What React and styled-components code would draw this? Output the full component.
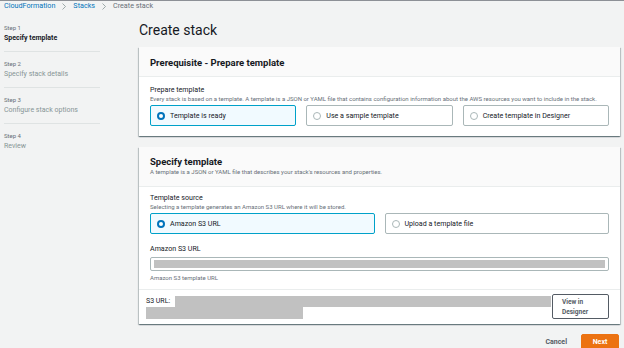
import React from 'react';
import styled, { createGlobalStyle } from 'styled-components';

const GlobalStyle = createGlobalStyle`
  html, body {
    margin: 0;
    padding: 0;
    background: #f2f3f3;
  }
  body {
    font-family: Roboto, "Liberation Sans", Arial, sans-serif;
    color: #16191f;
  }
  * {
    box-sizing: border-box;
  }
`;

const Page = styled.div`
  width: 624px;
  height: 348px;
  overflow: hidden;
  background: #f2f3f3;
  border-top: 1px solid #8d9096;
`;

const Breadcrumbs = styled.nav`
  display: flex;
  align-items: center;
  gap: 7px;
  height: 10px;
  padding-left: 4px;
  font-size: 7.2px;
  line-height: 10px;
`;

const Crumb = styled.span`
  color: ${props => (props.$current ? '#687078' : '#0073bb')};
`;

const Main = styled.div`
  display: flex;
  align-items: flex-start;
`;

const StepNav = styled.ol`
  list-style: none;
  margin: 0 0 0 4px;
  padding: 5px 0 0;
  width: 96px;
  flex-shrink: 0;
`;

const StepItem = styled.li`
  padding: 7px 0 8px;
  border-bottom: ${props => (props.$last ? 'none' : '1px solid #dfe3e3')};
`;

const StepNum = styled.div`
  font-size: 6px;
  line-height: 10px;
  color: #687078;
`;

const StepLabel = styled.div`
  font-size: 7px;
  line-height: 10px;
  font-weight: ${props => (props.$active ? 700 : 400)};
  color: ${props => (props.$active ? '#16191f' : '#879596')};
`;

const Content = styled.main`
  margin-left: 39px;
  width: 481px;
  display: flex;
  flex-direction: column;
`;

const Title = styled.h1`
  margin: 0 0 8px;
  padding-top: 10px;
  font-size: 14px;
  line-height: 18px;
  font-weight: 400;
  color: #16191f;
`;

const Panel = styled.section`
  background: #fff;
  box-shadow: 0 1px 1px 0 rgba(0, 28, 36, 0.35), 1px 1px 1px 0 rgba(0, 28, 36, 0.18),
    -1px 1px 1px 0 rgba(0, 28, 36, 0.18);

  & + & {
    margin-top: 11px;
  }
`;

const PanelHeader = styled.header`
  background: #fafafa;
  border-bottom: 1px solid #eaeded;
  padding: ${props => (props.$withDesc ? '9px 11px 10px' : '10px 11px 8px')};
`;

const PanelTitle = styled.h2`
  margin: 0;
  font-size: 9.5px;
  line-height: 11px;
  font-weight: 700;
`;

const PanelDesc = styled.p`
  margin: 1px 0 0;
  font-size: 6px;
  line-height: 8px;
  color: #687078;
`;

const PanelBody = styled.div`
  padding: ${props => props.$pad};
`;

const FieldLabel = styled.div`
  font-size: 7.1px;
  line-height: 10px;
  margin-top: ${props => props.$mt || 0}px;
`;

const FieldHint = styled.div`
  font-size: 6px;
  line-height: 8px;
  color: #687078;
  margin-top: ${props => props.$mt || 0}px;
`;

const Tiles = styled.div`
  display: grid;
  grid-template-columns: repeat(${props => props.$cols}, 1fr);
  gap: 10px;
  margin-top: 2px;
`;

const Tile = styled.div`
  height: 21px;
  display: flex;
  align-items: center;
  gap: 5px;
  padding-left: 6px;
  border: 1px solid ${props => (props.$selected ? '#00a1c9' : '#aab7b8')};
  background: ${props => (props.$selected ? '#f1faff' : '#fff')};
  border-radius: 2px;
  font-size: 7.1px;
  color: #16191f;
`;

const Radio = styled.span`
  width: 8px;
  height: 8px;
  border-radius: 50%;
  background: #fff;
  border: ${props => (props.$checked ? '2.5px solid #0073bb' : '1px solid #aab7b8')};
  flex-shrink: 0;
`;

const InputBox = styled.div`
  margin-top: 3px;
  height: 14px;
  padding: 2px 3px;
  border: 1px solid #aab7b8;
  border-radius: 2px;
  background: #fff;
`;

const Redacted = styled.span`
  display: block;
  background: #c1c1c1;
  height: ${props => props.$h}px;
  ${props => (props.$w ? `width: ${props.$w}px;` : 'flex: 1;')}
`;

const UrlRow = styled.div`
  display: flex;
  align-items: flex-start;
  gap: 1px;
  border-top: 1px solid #eaeded;
  padding: 4px 11px 5px 7px;
`;

const UrlValue = styled.div`
  flex: 1;
  display: flex;
  flex-direction: column;
  margin-top: 2px;
`;

const UrlLine = styled.div`
  display: flex;
  align-items: stretch;
  height: 11px;
`;

const UrlLabel = styled.span`
  font-size: 7px;
  line-height: 11px;
  padding-right: 5px;
  color: #16191f;
`;

const SecondaryButton = styled.button`
  width: 57px;
  height: 25px;
  padding: 2px 9px;
  border: 1px solid #545b64;
  border-radius: 2px;
  background: #fff;
  color: #545b64;
  font-family: inherit;
  font-size: 6.5px;
  line-height: 10px;
  font-weight: 700;
  text-align: left;
  flex-shrink: 0;
`;

const Actions = styled.div`
  display: flex;
  justify-content: flex-end;
  align-items: center;
  gap: 14px;
  margin-top: 10px;
  padding-right: 1px;
`;

const LinkButton = styled.button`
  background: none;
  border: none;
  padding: 0;
  font-family: inherit;
  font-size: 7px;
  font-weight: 700;
  color: #545b64;
`;

const PrimaryButton = styled.button`
  width: 38px;
  height: 16px;
  border: 1px solid #ec7211;
  border-radius: 2px;
  background: #ec7211;
  color: #fff;
  font-family: inherit;
  font-size: 7px;
  font-weight: 700;
  padding: 0;
`;

const Chevron = () => (
  <svg width="4" height="7" viewBox="0 0 4 7">
    <polyline points="0.5,0.5 3.5,3.5 0.5,6.5" fill="none" stroke="#879596" strokeWidth="0.8" />
  </svg>
);

const steps = [
  { num: 'Step 1', label: 'Specify template', active: true },
  { num: 'Step 2', label: 'Specify stack details' },
  { num: 'Step 3', label: 'Configure stack options' },
  { num: 'Step 4', label: 'Review' },
];

const prepareOptions = [
  { label: 'Template is ready', selected: true },
  { label: 'Use a sample template' },
  { label: 'Create template in Designer' },
];

const sourceOptions = [
  { label: 'Amazon S3 URL', selected: true },
  { label: 'Upload a template file' },
];

const RadioTiles = ({ options }) => (
  <Tiles $cols={options.length}>
    {options.map(opt => (
      <Tile key={opt.label} $selected={opt.selected}>
        <Radio $checked={opt.selected} />
        {opt.label}
      </Tile>
    ))}
  </Tiles>
);

const App = () => (
  <Page>
    <GlobalStyle />
    <Breadcrumbs>
      <Crumb>CloudFormation</Crumb>
      <Chevron />
      <Crumb>Stacks</Crumb>
      <Chevron />
      <Crumb $current>Create stack</Crumb>
    </Breadcrumbs>

    <Main>
      <StepNav>
        {steps.map((s, i) => (
          <StepItem key={s.num} $last={i === steps.length - 1}>
            <StepNum>{s.num}</StepNum>
            <StepLabel $active={s.active}>{s.label}</StepLabel>
          </StepItem>
        ))}
      </StepNav>

      <Content>
        <Title>Create stack</Title>

        <Panel>
          <PanelHeader>
            <PanelTitle>Prerequisite - Prepare template</PanelTitle>
          </PanelHeader>
          <PanelBody $pad="8px 11px 10px">
            <FieldLabel>Prepare template</FieldLabel>
            <FieldHint>
              Every stack is based on a template. A template is a JSON or YAML file that contains
              configuration information about the AWS resources you want to include in the stack.
            </FieldHint>
            <RadioTiles options={prepareOptions} />
          </PanelBody>
        </Panel>

        <Panel>
          <PanelHeader $withDesc>
            <PanelTitle>Specify template</PanelTitle>
            <PanelDesc>
              A template is a JSON or YAML file that describes your stack's resources and properties.
            </PanelDesc>
          </PanelHeader>
          <PanelBody $pad="6px 11px 7px">
            <FieldLabel>Template source</FieldLabel>
            <FieldHint>Selecting a template generates an Amazon S3 URL where it will be stored.</FieldHint>
            <RadioTiles options={sourceOptions} />
            <FieldLabel $mt={10}>Amazon S3 URL</FieldLabel>
            <InputBox>
              <Redacted $h={8} />
            </InputBox>
            <FieldHint $mt={3}>Amazon S3 template URL</FieldHint>
          </PanelBody>
          <UrlRow>
            <UrlValue>
              <UrlLine>
                <UrlLabel>S3 URL:</UrlLabel>
                <Redacted $h={11} />
              </UrlLine>
              <Redacted $h={12} $w={157} />
            </UrlValue>
            <SecondaryButton>
              View in
              <br />
              Designer
            </SecondaryButton>
          </UrlRow>
        </Panel>

        <Actions>
          <LinkButton>Cancel</LinkButton>
          <PrimaryButton>Next</PrimaryButton>
        </Actions>
      </Content>
    </Main>
  </Page>
);

export default App;
